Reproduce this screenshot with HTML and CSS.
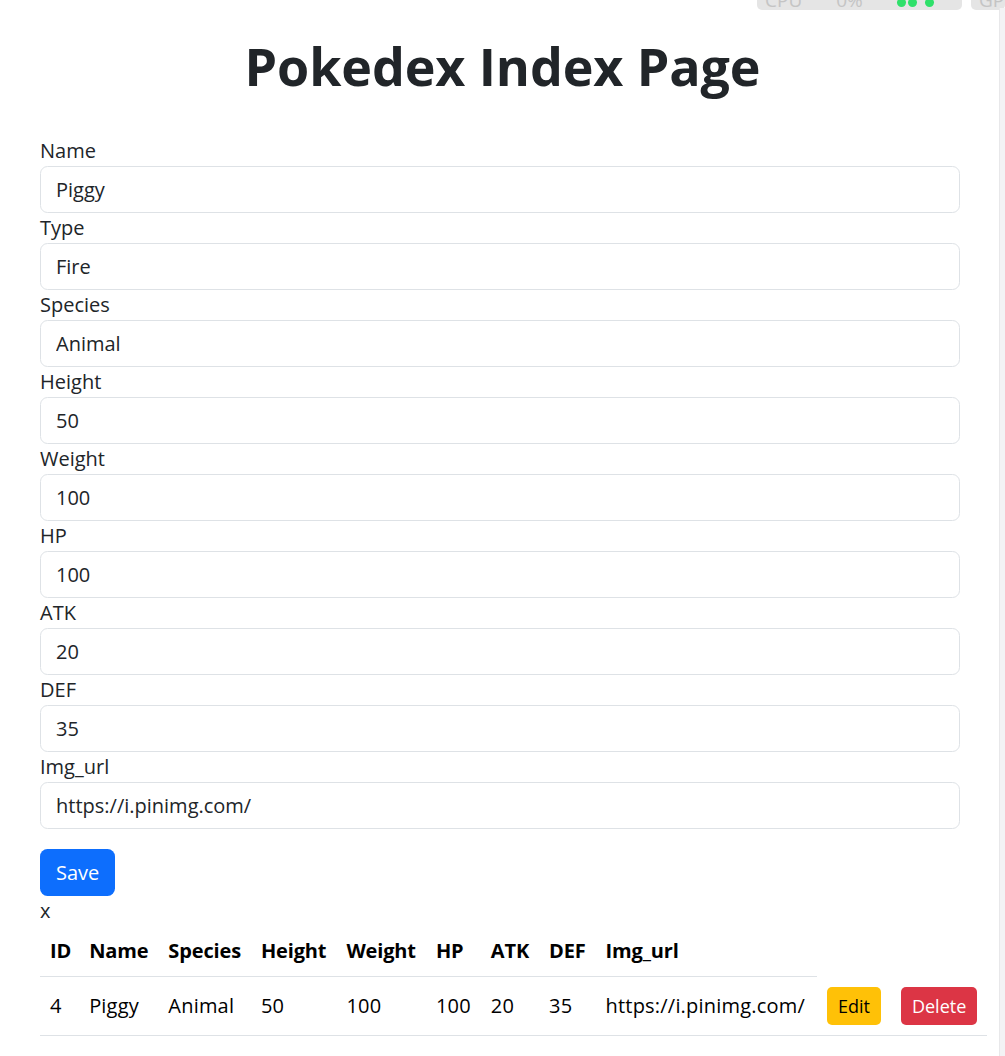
FILE: index.html
```html
<!DOCTYPE html>
<html lang="en">
<head>
  <meta charset="UTF-8"/>
  <meta name="viewport" content="width=device-width,initial-scale=1.0"/>
  <title>Pokedex Index Page</title>
  <link rel="stylesheet" href="styles.css">
</head>
<body>
  <div class="perf">
    <div class="perf-box perf-main"><span>CPU</span><span>0%</span><span class="dots"><i></i><i></i><i class="gap"></i></span></div>
    <div class="perf-box perf-side"><span>GP</span></div>
  </div>
  <div class="scroll-track"></div>

  <div class="page">
    <h1>Pokedex Index Page</h1>

    <form id="form" class="poke-form">
      <label for="name">Name</label>
      <input id="name" type="text" value="Piggy"/>
      <label for="type">Type</label>
      <input id="type" type="text" value="Fire"/>
      <label for="species">Species</label>
      <input id="species" type="text" value="Animal"/>
      <label for="height">Height</label>
      <input id="height" type="text" value="50"/>
      <label for="weight">Weight</label>
      <input id="weight" type="text" value="100"/>
      <label for="hp">HP</label>
      <input id="hp" type="text" value="100"/>
      <label for="atk">ATK</label>
      <input id="atk" type="text" value="20"/>
      <label for="def">DEF</label>
      <input id="def" type="text" value="35"/>
      <label for="img">Img_url</label>
      <input id="img" type="text" value="https://i.pinimg.com/"/>

      <button type="submit" class="btn btn-save">Save</button>
    </form>
    <div class="mark">x</div>

    <table class="poke-table">
      <thead>
        <tr>
          <th>ID</th><th>Name</th><th>Species</th><th>Height</th><th>Weight</th>
          <th>HP</th><th>ATK</th><th>DEF</th><th>Img_url</th>
        </tr>
      </thead>
      <tbody>
        <tr>
          <td>4</td><td>Piggy</td><td>Animal</td><td>50</td><td>100</td>
          <td>100</td><td>20</td><td>35</td><td class="url">https://i.pinimg.com/</td>
          <td><button class="btn btn-sm btn-edit">Edit</button></td>
          <td><button class="btn btn-sm btn-delete">Delete</button></td>
        </tr>
      </tbody>
    </table>
  </div>
</body>
</html>
```

FILE: styles.css
```css
body { margin:0; font-family:'Open Sans', sans-serif; font-size:20px; line-height:1.5; color:#212529; background:#fff; }

/* browser overlays: perf meter and scrollbar track */
.perf { position:absolute; top:-12px; right:0; display:flex; gap:9px; }
.perf-box { background:#e5e5e5; border-radius:0 0 5px 5px; height:22px; display:flex; align-items:flex-end; gap:34px; padding:0 14px 0 8px; color:#c4c4c4; font-size:19px; line-height:19px; overflow:hidden; }
.perf-main { width:183px; }
.perf-side { width:26px; padding-right:0; }
.dots { display:flex; gap:2px; padding-bottom:3px; }
.dots i { width:9px; height:9px; border-radius:50%; background:#2fe06a; }
.dots i.gap { margin-left:6px; }
.scroll-track { position:fixed; top:8px; right:0; bottom:0; width:5px; background:#f3f3f5; border-left:1px solid #e8e8ea; }

.page { padding:0 40px; }
h1 { margin:0; padding:35px 0 39px; text-align:center; font-size:52px; line-height:62px; font-weight:700; letter-spacing:-0.1px; }

.poke-form { display:flex; flex-direction:column; width:920px; }
.poke-form label { display:block; }
.poke-form input { font:inherit; color:#212529; padding:7.5px 15px; border:1px solid #dee2e6; border-radius:7.5px; background:#fff; box-sizing:border-box; width:100%; }

.btn { font:inherit; border:1px solid transparent; border-radius:7.5px; cursor:pointer; }
.btn-save { align-self:flex-start; margin-top:20px; padding:7.5px 15px; background:#0d6efd; color:#fff; }
.btn-sm { font-size:18px; padding:5px 10px; border-radius:5px; line-height:26px; }
.btn-edit { background:#ffc107; color:#000; }
.btn-delete { background:#dc3545; color:#fff; }

.poke-table { border-collapse:collapse; color:#000; }
.poke-table th, .poke-table td { padding:10px; text-align:left; vertical-align:top; border-bottom:1px solid #dee2e6; white-space:nowrap; }
.poke-table td { vertical-align:middle; letter-spacing:0.2px; }
.poke-table td.url { padding-right:12px; }
.poke-table th { font-weight:700; letter-spacing:-0.15px; }
.poke-table td:first-child, .poke-table th:first-child { padding-right:8px; }
```
